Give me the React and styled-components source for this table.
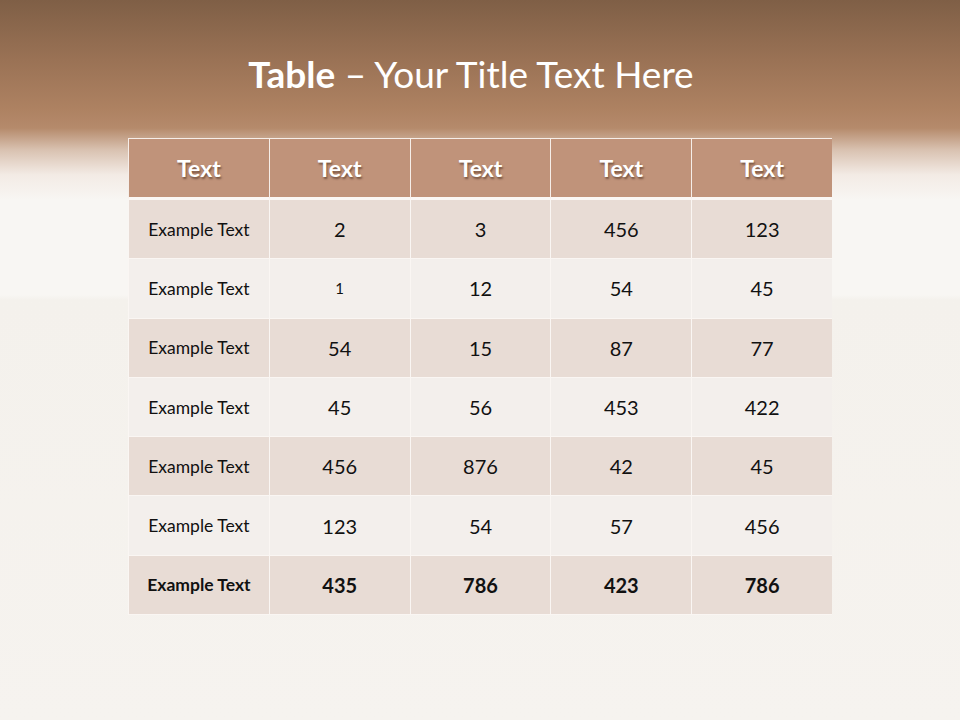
import React from 'react'
import styled, {createGlobalStyle} from 'styled-components'

const GlobalStyle = createGlobalStyle`
  html, body { margin: 0; padding: 0; }
  body { font-family: Lato, "Open Sans", sans-serif; }
`;

const Slide = styled.div`
  width: 960px;
  height: 720px;
  overflow: hidden;
  display: flex;
  flex-direction: column;
  align-items: center;
  background: linear-gradient(
    to bottom,
    #7f5f46 0px,
    #9a7255 60px,
    #ae8262 110px,
    #b58a6b 128px,
    #d9c2b1 150px,
    #f3ebe5 175px,
    #f8f6f3 200px,
    #f8f6f3 295px,
    #f4f1ec 300px,
    #f6f3ef 720px
  );
`;

const Title = styled.h1`
  margin: 52px 18px 0 0;
  height: 44px;
  font-size: 37px;
  line-height: 44px;
  font-weight: 400;
  color: #ffffff;
  white-space: nowrap;
  b { font-weight: 700; }
`;

const Grid = styled.div`
  margin-top: 42px;
  width: 704px;
  display: grid;
  grid-template-columns: repeat(5, 1fr);
  grid-template-rows: 62px;
  grid-auto-rows: 59.3px;
`;

const HeadCell = styled.div`
  display: flex;
  align-items: center;
  justify-content: center;
  background: #c0937a;
  border-left: 1px solid #f6eee9;
  border-top: 1px solid #f6eee9;
  border-bottom: 3px solid #fbf7f4;
  box-sizing: border-box;
  color: #fff;
  font-weight: 700;
  font-size: 23px;
  text-shadow: 1px 2px 2px rgba(60, 35, 20, 0.55);
  &:last-child { border-right: 1px solid #f6eee9; }
`;

const Cell = styled.div`
  display: flex;
  align-items: center;
  justify-content: center;
  box-sizing: border-box;
  background: ${p => (p.$odd ? '#e8dcd5' : '#f3efec')};
  border-left: 1px solid #faf6f3;
  border-bottom: 1px solid #faf6f3;
  font-size: ${p => (p.$label ? '17.5px' : p.$small ? '15px' : '20px')};
  font-weight: ${p => (p.$bold ? 700 : 400)};
  color: #111;
`;

const header = ['Text', 'Text', 'Text', 'Text', 'Text'];
const rows = [
  ['2', '3', '456', '123'],
  ['1', '12', '54', '45'],
  ['54', '15', '87', '77'],
  ['45', '56', '453', '422'],
  ['456', '876', '42', '45'],
  ['123', '54', '57', '456'],
  ['435', '786', '423', '786'],
];

export default function App() {
  return (
    <Slide>
      <GlobalStyle/>
      <Title><b>Table</b> – Your Title Text Here</Title>
      <Grid>
        {header.map((h, i) => <HeadCell key={i}>{h}</HeadCell>)}
        {rows.map((r, ri) => (
          <React.Fragment key={ri}>
            <Cell $odd={ri % 2 === 0} $label $bold={ri === rows.length - 1}>Example Text</Cell>
            {r.map((v, ci) => (
              <Cell key={ci}
                    $odd={ri % 2 === 0}
                    $small={ri === 1 && ci === 0}
                    $bold={ri === rows.length - 1}>{v}</Cell>
            ))}
          </React.Fragment>
        ))}
      </Grid>
    </Slide>
  );
}
